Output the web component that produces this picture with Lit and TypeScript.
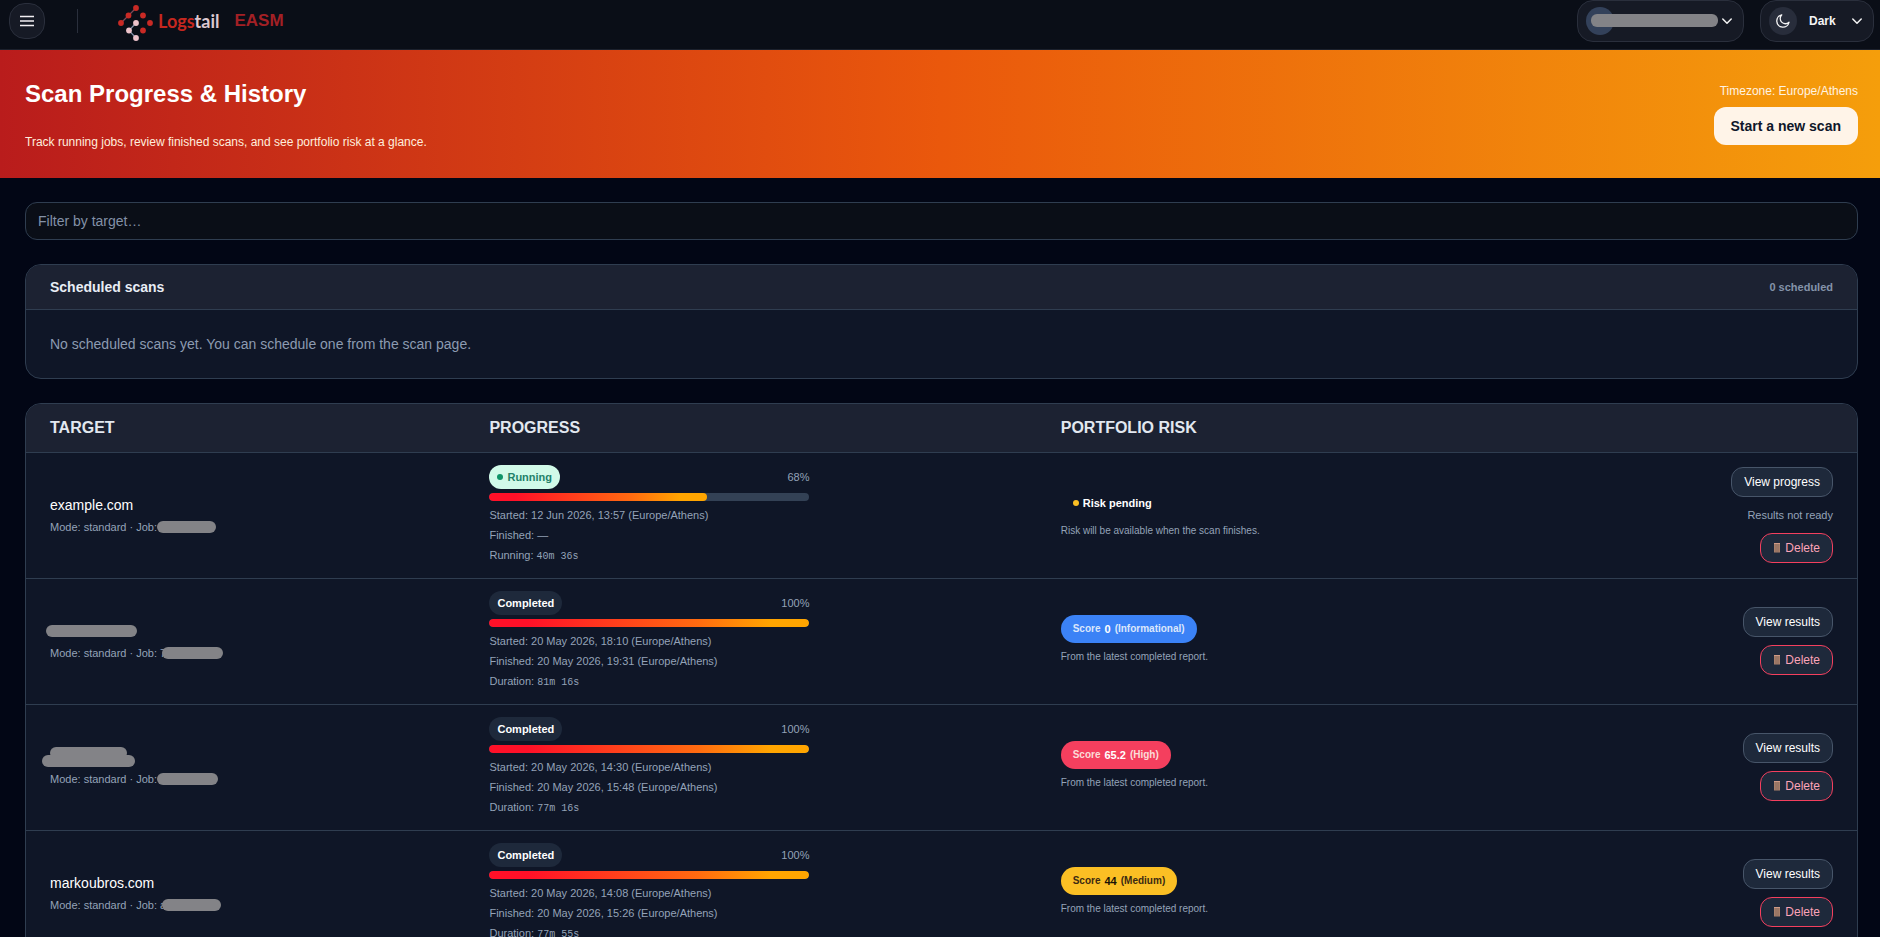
import { LitElement, html, css, svg, nothing } from "lit";
import { customElement, property, state } from "lit/decorators.js";
import { classMap } from "lit/directives/class-map.js";
import { styleMap } from "lit/directives/style-map.js";

type Risk = { score: string; label: string; level: "info" | "high" | "medium" };

interface Scan {
  target: string;
  targetMask?: "single" | "double";
  jobPrefix: string;
  jobMask: number;
  running: boolean;
  percent: number;
  started: string;
  finished: string;
  duration: string;
  risk?: Risk;
}

const SCANS: Scan[] = [
  { target: "example.com", jobPrefix: "", jobMask: 59, running: true, percent: 68, started: "12 Jun 2026, 13:57 (Europe/Athens)", finished: "—", duration: "40m 36s" },
  { target: "", targetMask: "single", jobPrefix: " 7", jobMask: 61, running: false, percent: 100, started: "20 May 2026, 18:10 (Europe/Athens)", finished: "20 May 2026, 19:31 (Europe/Athens)", duration: "81m 16s", risk: { score: "0", label: "Informational", level: "info" } },
  { target: "", targetMask: "double", jobPrefix: "", jobMask: 61, running: false, percent: 100, started: "20 May 2026, 14:30 (Europe/Athens)", finished: "20 May 2026, 15:48 (Europe/Athens)", duration: "77m 16s", risk: { score: "65.2", label: "High", level: "high" } },
  { target: "markoubros.com", jobPrefix: " a", jobMask: 59, running: false, percent: 100, started: "20 May 2026, 14:08 (Europe/Athens)", finished: "20 May 2026, 15:26 (Europe/Athens)", duration: "77m 55s", risk: { score: "44", label: "Medium", level: "medium" } },
];

const chevron = svg`<svg width="10" height="10" viewBox="0 0 10 10" fill="none" stroke="currentColor" stroke-width="1.5" stroke-linecap="round" stroke-linejoin="round" aria-hidden="true"><path d="M.8 3l4.200 4.200L9.200 3"/></svg>`;

@customElement("top-bar")
class TopBar extends LitElement {
  static styles = css`
    :host { display: block; }
    .bar {
      box-sizing: border-box; height: 50px; padding: 0 6px 8px 9px;
      display: flex; align-items: center; justify-content: space-between;
      background: #0a0e17; border-bottom: 1px solid #1c212d;
    }
    .side { display: flex; align-items: center; }
    button { font: inherit; color: inherit; cursor: pointer; }
    .menu {
      width: 36px; height: 36px; padding: 0; border-radius: 16px;
      display: grid; place-items: center;
      background: #161a25; border: 1px solid #2a2f3c;
    }
    .rule { width: 1px; height: 24px; margin: 0 40px 0 32px; background: #2a2f3c; }
    .logo { display: flex; align-items: center; gap: 4px; color: #b9272c; text-decoration: none; }
    .mark { display: block; margin-top: 4px; }
    .word { font: 700 18px/24px Lato, "Open Sans", sans-serif; color: #c5271f; }
    .word .tail { color: #dcc8d0; }
    .product { margin-left: 11px; font: 700 17px/24px "Liberation Sans", Arial, sans-serif; color: #a32025; }
    .right { gap: 16px; }
    .pill {
      box-sizing: border-box; height: 42px; border-radius: 16px;
      display: flex; align-items: center; color: #f4f4f5;
      background: #161a25; border: 1px solid #2a2f3c;
    }
    .account { width: 167px; padding: 0 11px 0 8px; justify-content: space-between; }
    .avatar { width: 28px; height: 28px; border-radius: 50%; background: #33415a; display: flex; align-items: center; }
    .mask { flex: none; width: 127px; height: 13px; margin-left: 5px; border-radius: 6px; background: #838387; }
    .theme { width: 114px; padding: 0 11px 0 8px; gap: 12px; font-weight: 700; font-size: 12px; }
    .label { flex: 1; text-align: left; }
    .moon { width: 28px; height: 28px; border-radius: 50%; display: grid; place-items: center; background: #282d3b; }
  `;

  render() {
    return html`
      <header class="bar">
        <div class="side">
          <button class="menu" type="button" aria-label="Open menu">
            <svg width="14" height="12" viewBox="0 0 14 12" stroke="#f1eef2" stroke-width="1.6" aria-hidden="true"><path d="M0 1.500h14M0 6h14M0 10.500h14"/></svg>
          </button>
          <span class="rule"></span>
          <a class="logo" href="#" aria-label="Logstail EASM home">
            <svg class="mark" width="36" height="38" viewBox="0 0 36 38" aria-hidden="true">
              <g stroke="#7d4a58" stroke-width="1.200"><path d="M18 4L10.500 11.500 3 19"/></g>
              <g fill="none" stroke="#8390a8" stroke-width="1.200"><path d="M18 19l-7 7.500 7 7.500"/></g>
              <g fill="#c92a25"><circle cx="18" cy="4" r="2.900"/><circle cx="10.500" cy="11.500" r="2.900"/><circle cx="25" cy="11.500" r="2.900"/><circle cx="3" cy="19" r="2.900"/><circle cx="32" cy="19" r="2.900"/><circle cx="25" cy="26.500" r="2.900"/></g>
              <g fill="#eec3cb"><circle cx="18" cy="19" r="2.900"/><circle cx="11" cy="26.500" r="2.900"/><circle cx="18" cy="34" r="2.900"/></g>
            </svg>
            <span class="word">Logs<span class="tail">tail</span></span>
            <span class="product">EASM</span>
          </a>
        </div>
        <div class="side right">
          <button class="pill account" type="button" aria-label="Account">
            <span class="avatar"><span class="mask"></span></span>
            ${chevron}
          </button>
          <button class="pill theme" type="button">
            <span class="moon">
              <svg width="16" height="16" viewBox="0 0 16 16" fill="none" stroke="#f4f4f5" stroke-width="1.3" stroke-linejoin="round" aria-hidden="true"><path d="M14 9.300A6.200 6.200 0 1 1 6.800 1.800 5 5 0 0 0 14 9.300z"/></svg>
            </span>
            <span class="label">Dark</span>
            ${chevron}
          </button>
        </div>
      </header>
    `;
  }
}

@customElement("scan-table")
class ScanTable extends LitElement {
  @property({ attribute: false }) scans: Scan[] = [];

  static styles = css`
    :host { display: block; }
    .panel { border: 1px solid #2f3d50; border-radius: 16px; overflow: hidden; background: #0f1627; }
    table { width: 100%; border-collapse: separate; border-spacing: 0; table-layout: fixed; }
    .col-target { width: 24%; }
    .col-progress { width: 31.2%; }
    th {
      height: 48px; box-sizing: content-box; padding: 0 24px; text-align: left;
      font-size: 16px; font-weight: 700; line-height: 24px; color: #e2e8f0;
      background: #1c2232; border-bottom: 1px solid #2f3d50;
    }
    td { padding: 12px 24px 13px; vertical-align: middle; border-bottom: 1px solid #2f3d50; }
    .target { font-size: 14px; line-height: 20px; color: #fff; height: 20px; }
    .meta { display: flex; align-items: center; margin-top: 4px; font-size: 11px; line-height: 16px; color: #94a3b8; white-space: pre; }
    .mask { height: 12px; border-radius: 6px; background: #838387; }
    .mask.over { margin-left: -4px; }
    .target .mask { width: 91px; margin-left: -4px; }
    .target.single { display: flex; align-items: center; }
    .target.double { display: flex; flex-direction: column; }
    .target.double .mask { width: 93px; margin: -4px 0 0 -8px; }
    .target.double .mask:first-child { width: 77px; margin: 0; }
    .progress { max-width: 320px; }
    .head { display: flex; align-items: center; justify-content: space-between; font-size: 11px; line-height: 16px; color: #94a3b8; }
    .badge {
      display: flex; align-items: center; gap: 4px; height: 24px; padding: 0 8px; border-radius: 12px;
      font-weight: 700; color: #fff; background: #1e293b;
    }
    .badge.running { color: #23816a; background: #d1fae9; }
    .dot { width: 6px; height: 6px; border-radius: 50%; background: #0f9468; }
    .dot.wait { background: #fbbf24; }
    .track { height: 8px; margin: 4px 0; border-radius: 4px; overflow: hidden; background: #334155; }
    .fill { height: 100%; border-radius: 4px; background: linear-gradient(90deg, #ff1028 12%, #ff6a10 65%, #ffa500 88%); }
    .line { height: 20px; font-size: 11px; line-height: 20px; color: #94a3b8; }
    .mono { font-family: "Liberation Mono", monospace; font-size: 10px; line-height: 12px; }
    .risk { display: flex; flex-direction: column; align-items: flex-start; gap: 4px; }
    .score {
      display: flex; align-items: center; gap: 4px; box-sizing: border-box; height: 28px; padding: 0 12px; border-radius: 14px;
      font-size: 10px; font-weight: 700; line-height: 16px;
    }
    .score b { font-size: 11px; }
    .info { background: #3b82f6; color: #dbe7fb; }
    .high { background: #f43f5e; color: #fbdcd8; }
    .info b, .high b { color: #fff; }
    .medium { background: #fbbf24; color: #3c2a12; }
    .medium b { color: #1a1206; }
    .pending { font-size: 11px; color: #fff; }
    .note { font-size: 10px; line-height: 20px; color: #94a3b8; }
    .actions { display: flex; flex-direction: column; align-items: flex-end; gap: 8px; }
    .actions span { font-size: 11px; line-height: 20px; color: #94a3b8; }
    .btn {
      box-sizing: border-box; height: 30px; padding: 0 12px; border-radius: 12px;
      display: flex; align-items: center; gap: 4px; white-space: nowrap;
      font: 12px/16px "Liberation Sans", Arial, sans-serif; color: #fff; text-decoration: none;
      background: #1e293b; border: 1px solid #475569; cursor: pointer;
    }
    .danger { color: #fda4b8; border-color: #f43f5e; }
  `;

  private row(s: Scan) {
    return html`
      <tr>
        <td>
          <div class=${classMap({ target: true, single: s.targetMask === "single", double: s.targetMask === "double" })}>
            ${s.target}
            ${s.targetMask ? html`<div class="mask"></div>` : nothing}
            ${s.targetMask === "double" ? html`<div class="mask"></div>` : nothing}
          </div>
          <div class="meta"><span>Mode: standard · Job:${s.jobPrefix}</span><span class=${classMap({ mask: true, over: s.jobPrefix !== "" })} style=${styleMap({ width: `${s.jobMask}px` })}></span></div>
        </td>
        <td>
          <div class="progress">
            <div class="head">
              <span class=${classMap({ badge: true, running: s.running })}>
                ${s.running ? html`<span class="dot"></span>Running` : "Completed"}
              </span>
              <span>${s.percent}%</span>
            </div>
            <div class="track" role="progressbar" aria-label="Scan progress" aria-valuenow=${s.percent}><div class="fill" style=${styleMap({ width: `${s.percent}%` })}></div></div>
            <div class="line">Started: ${s.started}</div>
            <div class="line">Finished: ${s.finished}</div>
            <div class="line">${s.running ? "Running" : "Duration"}: <span class="mono">${s.duration}</span></div>
          </div>
        </td>
        <td>
          ${s.risk
            ? html`<div class="risk">
                <span class="score ${s.risk.level}"><span>Score</span><b>${s.risk.score}</b><span>(${s.risk.label})</span></span>
                <span class="note">From the latest completed report.</span>
              </div>`
            : html`<div class="risk">
                <span class="score pending"><span class="dot wait"></span>Risk pending</span>
                <span class="note">Risk will be available when the scan finishes.</span>
              </div>`}
        </td>
        <td>
          <div class="actions">
            <a class="btn" href="#">${s.running ? "View progress" : "View results"}</a>
            ${s.running ? html`<span>Results not ready</span>` : nothing}
            <button class="btn danger" type="button">
              <svg width="8" height="10" viewBox="0 0 8 10" aria-hidden="true"><path fill="#a8806c" d="M1 0h6v9.500H1z"/><path stroke="#86675c" stroke-width=".8" d="M3 1v8M5 1v8"/><path stroke="#d09a86" stroke-width="1" d="M1 .5h6"/></svg>
              Delete
            </button>
          </div>
        </td>
      </tr>
    `;
  }

  render() {
    return html`
      <div class="panel">
        <table>
          <colgroup><col class="col-target" /><col class="col-progress" /><col /><col /></colgroup>
          <thead>
            <tr><th scope="col">TARGET</th><th scope="col">PROGRESS</th><th scope="col">PORTFOLIO RISK</th><th scope="col" aria-label="Actions"></th></tr>
          </thead>
          <tbody>${this.scans.map((s) => this.row(s))}</tbody>
        </table>
      </div>
    `;
  }
}

@customElement("app-root")
class AppRoot extends LitElement {
  @state() private filter = "";

  static styles = css`
    :host {
      display: block; box-sizing: border-box; height: 100vh; overflow: hidden;
      font-family: "Liberation Sans", Arial, sans-serif; font-size: 14px; line-height: 20px;
      color: #e2e8f0; background: #020615;
    }
    .hero {
      display: flex; justify-content: space-between; box-sizing: border-box; min-height: 128px; padding: 28px 22px 24px 25px;
      background: linear-gradient(90deg, #b91c1c, #ea580c 50%, #f59e0b);
    }
    h1 { margin: 0 0 24px; font-size: 24px; line-height: 32px; font-weight: 700; color: #fff; }
    .lead { margin: 0; font-size: 12px; line-height: 16px; color: #ffeedd; }
    .side { display: flex; flex-direction: column; align-items: flex-end; gap: 8px; padding-top: 5px; }
    .zone { font-size: 12px; line-height: 16px; color: #fff3e2; }
    .start {
      height: 38px; padding: 0 17px; border: 0; border-radius: 12px; cursor: pointer;
      font: 700 14px/20px "Liberation Sans", Arial, sans-serif; color: #0f172a; background: #fff4e8;
    }
    .content { display: flex; flex-direction: column; gap: 24px; padding: 24px 22px 24px 25px; }
    .filter {
      box-sizing: border-box; width: 100%; height: 38px; padding: 0 12px; border-radius: 12px;
      border: 1px solid #2f3d50; background: #0a0e17; color: #e2e8f0; outline: none; display: block;
      font: 14px/20px "Liberation Sans", Arial, sans-serif;
    }
    .filter::placeholder { color: #8391a7; opacity: 1; }
    .panel { border: 1px solid #2f3d50; border-radius: 16px; overflow: hidden; background: #0f1627; }
    .panel-head {
      display: flex; align-items: center; justify-content: space-between; padding: 12px 24px;
      background: #1c2232; border-bottom: 1px solid #2f3d50;
    }
    h2 { margin: 0; font-size: 14px; line-height: 20px; font-weight: 700; color: #e8edf5; }
    .count { font-size: 11px; font-weight: 700; color: #8493a9; }
    .empty { margin: 0; padding: 24px; color: #8c9bb1; }
  `;

  private onFilter(e: Event) {
    this.filter = (e.target as HTMLInputElement).value.trim().toLowerCase();
  }

  render() {
    const scans = SCANS.filter((s) => s.target.includes(this.filter));
    return html`
      <top-bar></top-bar>
      <section class="hero">
        <div>
          <h1>Scan Progress &amp; History</h1>
          <p class="lead">Track running jobs, review finished scans, and see portfolio risk at a glance.</p>
        </div>
        <div class="side">
          <span class="zone">Timezone: Europe/Athens</span>
          <button class="start" type="button">Start a new scan</button>
        </div>
      </section>
      <main class="content">
        <input class="filter" type="text" placeholder="Filter by target…" aria-label="Filter by target" @input=${this.onFilter} />
        <section class="panel">
          <div class="panel-head"><h2>Scheduled scans</h2><span class="count">0 scheduled</span></div>
          <p class="empty">No scheduled scans yet. You can schedule one from the scan page.</p>
        </section>
        <scan-table .scans=${scans}></scan-table>
      </main>
    `;
  }
}
